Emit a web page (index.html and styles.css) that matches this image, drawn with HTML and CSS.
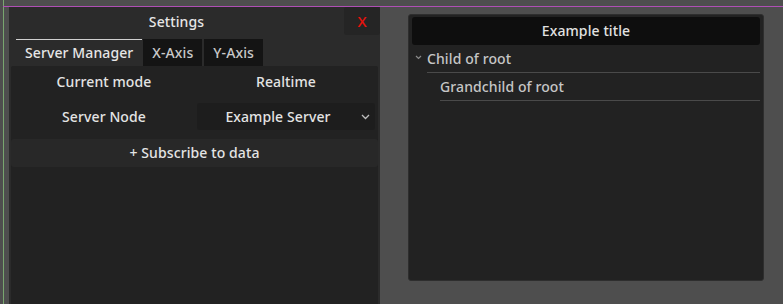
FILE: index.html
```html
<!DOCTYPE html>
<html lang="en">
<head>
    <title>settings</title>
    <link rel="stylesheet" href="styles.css">
</head>
<body>
  <div class="desktop">
    <div class="guide_v"></div>
    <div class="guide_h"></div>

    <div class="win settings">
        <div class="titlebar">
            <span class="title">Settings</span>
            <button class="close">X</button>
        </div>
        <div class="tabs">
            <div class="tab active">Server Manager</div>
            <div class="tab">X-Axis</div>
            <div class="tab">Y-Axis</div>
        </div>
        <div class="body">
            <div class="row">
                <div class="cell">Current mode</div>
                <div class="cell">Realtime</div>
            </div>
            <div class="row">
                <div class="cell">Server Node</div>
                <div class="cell combo">
                    <span>Example Server</span>
                    <svg class="chev" width="9" height="6" viewBox="0 0 9 6"><path d="M1 1 L4.5 4.5 L8 1" fill="none" stroke="#bdbdbd" stroke-width="1.3"/></svg>
                </div>
            </div>
            <div class="subscribe">+ Subscribe to data</div>
        </div>
    </div>

    <div class="win tree">
        <div class="tree_title">Example title</div>
        <div class="node">
            <svg class="node_chev" width="7" height="5" viewBox="0 0 7 5"><path d="M1 1 L3.5 3.5 L6 1" fill="none" stroke="#8a8a8a" stroke-width="1.2"/></svg>
            <span>Child of root</span>
        </div>
        <div class="node leaf">
            <span>Grandchild of root</span>
        </div>
    </div>
  </div>
</body>
</html>
```
FILE: styles.css
```css
*{
    margin: 0;
    box-sizing: border-box;
}
body{
    background-color: #4e4e4e;
    font-family: "Noto Sans", "Open Sans", sans-serif;
    font-size: 14px;
    font-weight: 500;
    letter-spacing: 0.1px;
    color: #e4e4e4;
}
.desktop{
    position: relative;
    width: 783px;
    height: 304px;
    overflow: hidden;
}
.guide_v{
    position: absolute;
    left: 3px;
    top: 0;
    width: 1px;
    height: 304px;
    background-color: #79a66f;
    z-index: 5;
}
.guide_h{
    position: absolute;
    left: 3px;
    top: 6px;
    width: 780px;
    height: 1px;
    background-color: #b04fb5;
    z-index: 5;
}
.win{
    position: absolute;
}

/* settings window */
.settings{
    left: 9px;
    top: 7px;
    width: 371px;
    height: 310px;
    background-color: #2b2b2b;
    padding: 0 2px;
    display: flex;
    flex-direction: column;
}
.titlebar{
    height: 28px;
    display: flex;
    align-items: center;
    margin: 0 -2px;
}
.title{
    flex: 1;
    text-align: center;
    color: #e6e6e6;
}
.close{
    width: 36px;
    height: 28px;
    border: none;
    border-radius: 3px;
    background-color: #252525;
    color: #e8120c;
    font-family: "Noto Sans", sans-serif;
    font-size: 15px;
    font-weight: 500;
    padding: 0;
}
.tabs{
    display: flex;
    gap: 2px;
    margin-top: 4px;
    padding-left: 5px;
    height: 27px;
}
.tab{
    background-color: #141414;
    color: #c9c9c9;
    padding: 0 9px;
    line-height: 27px;
}
.tab.active{
    background-color: #2b2b2b;
    color: #e6e6e6;
    border-top: 1px solid #d0d0d0;
    line-height: 26px;
    padding: 0 9px;
    margin-right: -1px;
}
.body{
    flex: 1;
    background-color: #222222;
    border-radius: 2px;
}
.row{
    display: grid;
    grid-template-columns: 186px 178px;
    height: 36px;
    align-items: center;
}
.row:first-child{
    height: 30px;
    margin-bottom: 2px;
}
.cell{
    text-align: center;
}
.combo{
    position: relative;
    height: 27px;
    line-height: 27px;
    background-color: #1d1d1d;
    border-radius: 3px;
    padding-right: 16px;
}
.chev{
    position: absolute;
    right: 5px;
    top: 11px;
}
.subscribe{
    margin-top: 5px;
    height: 28px;
    line-height: 28px;
    text-align: center;
    background-color: #282828;
    border-radius: 3px;
}

/* tree window */
.tree{
    left: 408px;
    top: 14px;
    width: 356px;
    height: 267px;
    background-color: #222222;
    border: 1px solid #2e2e2e;
    border-radius: 3px;
    padding: 2px 3px;
}
.tree_title{
    height: 28px;
    line-height: 28px;
    text-align: center;
    background-color: #0e0e0e;
    border-radius: 3px;
    color: #e2e2e2;
}
.node{
    display: flex;
    align-items: center;
    height: 28px;
    color: #c6c6c6;
    padding-left: 3px;
}
.node span{
    flex: 1;
    border-bottom: 1px solid #4a4a4a;
    line-height: 27px;
}
.node_chev{
    margin-right: 5px;
    margin-top: -3px;
}
.leaf{
    padding-left: 28px;
}
```
